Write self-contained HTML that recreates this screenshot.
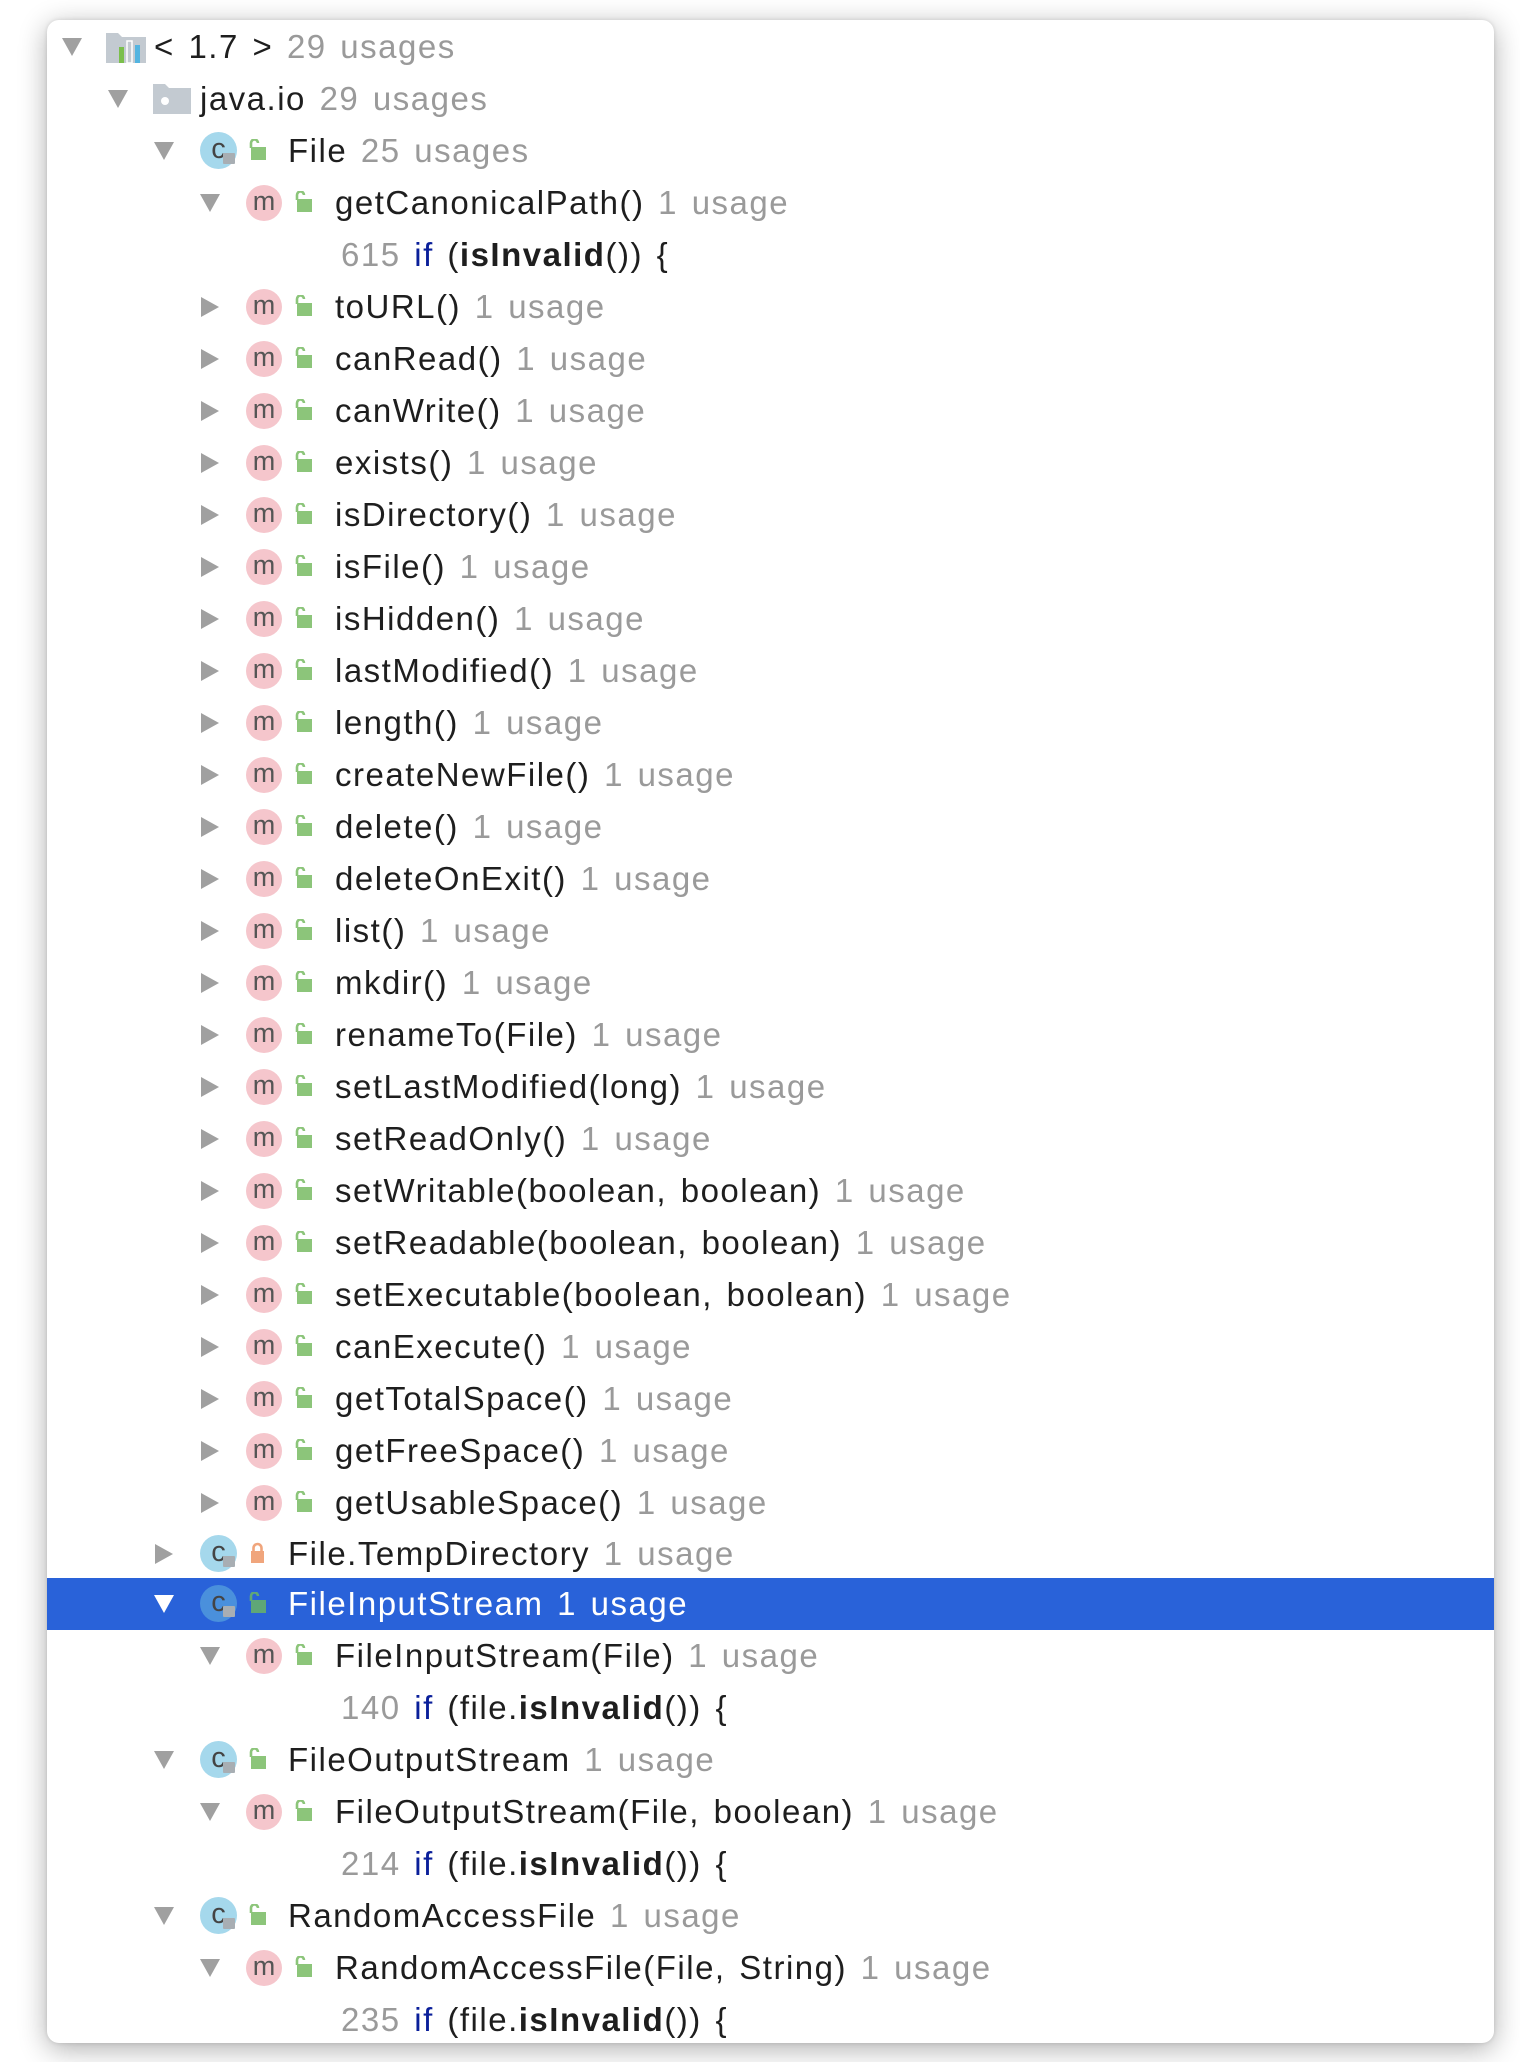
<!DOCTYPE html>
<html><head><meta charset="utf-8"><style>
html,body{margin:0;padding:0;background:#fff;width:1520px;height:2062px;overflow:hidden}
.panel{position:absolute;left:47px;top:20px;width:1447px;height:2023px;background:#fff;border-radius:12px;box-shadow:0 6px 28px rgba(0,0,0,0.32),0 0 4px rgba(0,0,0,0.12);overflow:hidden}
.r{position:absolute;left:0;width:1447px;height:52px;font-family:"Liberation Sans",sans-serif;font-size:33px;color:#1e1e1e;letter-spacing:1.5px;word-spacing:3px;white-space:nowrap}
.r>*{position:absolute}
.t{top:0;height:52px;line-height:52px}
.u{color:#9a9a9a}
.tri{width:0;height:0;top:17px}
.down{border-left:10px solid transparent;border-right:10px solid transparent;border-top:18px solid #a0a0a0}
.right{border-top:10px solid transparent;border-bottom:10px solid transparent;border-left:18px solid #a0a0a0;top:16px}
.m{width:36px;height:36px;border-radius:50%;background:#f5c6cc;top:8px;text-align:center;line-height:33px;font-size:27px;color:#555;letter-spacing:0}
.c{width:37px;height:37px;border-radius:50%;background:#a5d8ec;top:7px;text-align:center;line-height:35px;font-size:29px;color:#444;letter-spacing:0}
.c::after{content:"";position:absolute;left:23px;top:21px;width:12px;height:11px;background:#a8aeb3;border-radius:1px}
.sel{background:#2962d9;color:#fff}
.sel .u{color:#fff}
.kw{color:#0a1f9a}
b{font-weight:bold}
</style></head><body>
<div class="panel">
<svg width="0" height="0" style="position:absolute"><defs>
<g id="lk"><rect x="4" y="8" width="15" height="13" fill="#8cc57a"/><path d="M4 9 V4 a3.5 3.5 0 0 1 7 0" fill="none" stroke="#8cc57a" stroke-width="2.6"/></g>
</defs></svg>

<div class="r" style="top:1px"><div class="tri down" style="left:15px"></div>
<svg style="left:59px;top:10px" width="42" height="32"><path d="M0 2 h12 l4 4 h24 v26 h-40z" fill="#c3cad1"/><rect x="13" y="16" width="5" height="16" fill="#7bbf4c"/><rect x="21" y="10" width="5" height="22" fill="#c3cad1" stroke="#fff" stroke-width="1.5"/><rect x="29" y="14" width="5" height="18" fill="#53b4e0"/></svg>
<div class="t" style="left:107px">&lt; 1.7 &gt; <span class="u">29 usages</span></div></div>

<div class="r" style="top:53px"><div class="tri down" style="left:61px"></div>
<svg style="left:106px;top:11px" width="38" height="30"><path d="M0 0 h12 l4 4 h22 v26 h-38z" fill="#c3cad1"/><circle cx="12" cy="17" r="4" fill="#fff"/></svg>
<div class="t" style="left:153px">java.io <span class="u">29 usages</span></div></div>

<div class="r" style="top:105px"><div class="tri down" style="left:107px"></div>
<div class="c" style="left:153px">c</div><svg style="left:200px;top:14px" width="22" height="22"><use href="#lk"/></svg>
<div class="t" style="left:241px">File <span class="u">25 usages</span></div></div>

<div class="r" style="top:157px"><div class="tri down" style="left:153px"></div>
<div class="m" style="left:199px">m</div><svg style="left:246px;top:14px" width="22" height="22"><use href="#lk"/></svg>
<div class="t" style="left:288px">getCanonicalPath() <span class="u">1 usage</span></div></div>

<div class="r" style="top:209px"><div class="t" style="left:294px"><span class="u">615</span> <span class="kw">if</span> (<b>isInvalid</b>()) {</div></div>

<div class="r" style="top:1508px"><div class="tri right" style="left:108px"></div>
<div class="c" style="left:153px">c</div><svg style="left:200px;top:14px" width="22" height="22"><rect x="4" y="9" width="13" height="12" fill="#f0a57c"/><path d="M6.5 10 V6 a4 4 0 0 1 8 0 V10" fill="none" stroke="#f0a57c" stroke-width="2.6"/></svg>
<div class="t" style="left:241px">File.TempDirectory <span class="u">1 usage</span></div></div>

<div class="r sel" style="top:1558px;height:52px"><div class="tri down" style="left:107px;border-top-color:#fff"></div>
<div class="c" style="left:153px;background:#4a90dc">c</div><svg style="left:200px;top:14px" width="22" height="22"><rect x="4" y="8" width="15" height="13" fill="#5fa777"/><path d="M4 9 V4 a3.5 3.5 0 0 1 7 0" fill="none" stroke="#5fa777" stroke-width="2.6"/></svg>
<div class="t" style="left:241px">FileInputStream <span class="u">1 usage</span></div></div>

<div class="r" style="top:1610px"><div class="tri down" style="left:153px"></div>
<div class="m" style="left:199px">m</div><svg style="left:246px;top:14px" width="22" height="22"><use href="#lk"/></svg>
<div class="t" style="left:288px">FileInputStream(File) <span class="u">1 usage</span></div></div>
<div class="r" style="top:1662px"><div class="t" style="left:294px"><span class="u">140</span> <span class="kw">if</span> (file.<b>isInvalid</b>()) {</div></div>

<div class="r" style="top:1714px"><div class="tri down" style="left:107px"></div>
<div class="c" style="left:153px">c</div><svg style="left:200px;top:14px" width="22" height="22"><use href="#lk"/></svg>
<div class="t" style="left:241px">FileOutputStream <span class="u">1 usage</span></div></div>
<div class="r" style="top:1766px"><div class="tri down" style="left:153px"></div>
<div class="m" style="left:199px">m</div><svg style="left:246px;top:14px" width="22" height="22"><use href="#lk"/></svg>
<div class="t" style="left:288px">FileOutputStream(File, boolean) <span class="u">1 usage</span></div></div>
<div class="r" style="top:1818px"><div class="t" style="left:294px"><span class="u">214</span> <span class="kw">if</span> (file.<b>isInvalid</b>()) {</div></div>

<div class="r" style="top:1870px"><div class="tri down" style="left:107px"></div>
<div class="c" style="left:153px">c</div><svg style="left:200px;top:14px" width="22" height="22"><use href="#lk"/></svg>
<div class="t" style="left:241px">RandomAccessFile <span class="u">1 usage</span></div></div>
<div class="r" style="top:1922px"><div class="tri down" style="left:153px"></div>
<div class="m" style="left:199px">m</div><svg style="left:246px;top:14px" width="22" height="22"><use href="#lk"/></svg>
<div class="t" style="left:288px">RandomAccessFile(File, String) <span class="u">1 usage</span></div></div>
<div class="r" style="top:1974px"><div class="t" style="left:294px"><span class="u">235</span> <span class="kw">if</span> (file.<b>isInvalid</b>()) {</div></div>

<div class="r" style="top:261px"><div class="tri right" style="left:154px"></div><div class="m" style="left:199px">m</div><svg style="left:246px;top:14px" width="22" height="22"><use href="#lk"/></svg><div class="t" style="left:288px">toURL() <span class="u">1 usage</span></div></div>
<div class="r" style="top:313px"><div class="tri right" style="left:154px"></div><div class="m" style="left:199px">m</div><svg style="left:246px;top:14px" width="22" height="22"><use href="#lk"/></svg><div class="t" style="left:288px">canRead() <span class="u">1 usage</span></div></div>
<div class="r" style="top:365px"><div class="tri right" style="left:154px"></div><div class="m" style="left:199px">m</div><svg style="left:246px;top:14px" width="22" height="22"><use href="#lk"/></svg><div class="t" style="left:288px">canWrite() <span class="u">1 usage</span></div></div>
<div class="r" style="top:417px"><div class="tri right" style="left:154px"></div><div class="m" style="left:199px">m</div><svg style="left:246px;top:14px" width="22" height="22"><use href="#lk"/></svg><div class="t" style="left:288px">exists() <span class="u">1 usage</span></div></div>
<div class="r" style="top:469px"><div class="tri right" style="left:154px"></div><div class="m" style="left:199px">m</div><svg style="left:246px;top:14px" width="22" height="22"><use href="#lk"/></svg><div class="t" style="left:288px">isDirectory() <span class="u">1 usage</span></div></div>
<div class="r" style="top:521px"><div class="tri right" style="left:154px"></div><div class="m" style="left:199px">m</div><svg style="left:246px;top:14px" width="22" height="22"><use href="#lk"/></svg><div class="t" style="left:288px">isFile() <span class="u">1 usage</span></div></div>
<div class="r" style="top:573px"><div class="tri right" style="left:154px"></div><div class="m" style="left:199px">m</div><svg style="left:246px;top:14px" width="22" height="22"><use href="#lk"/></svg><div class="t" style="left:288px">isHidden() <span class="u">1 usage</span></div></div>
<div class="r" style="top:625px"><div class="tri right" style="left:154px"></div><div class="m" style="left:199px">m</div><svg style="left:246px;top:14px" width="22" height="22"><use href="#lk"/></svg><div class="t" style="left:288px">lastModified() <span class="u">1 usage</span></div></div>
<div class="r" style="top:677px"><div class="tri right" style="left:154px"></div><div class="m" style="left:199px">m</div><svg style="left:246px;top:14px" width="22" height="22"><use href="#lk"/></svg><div class="t" style="left:288px">length() <span class="u">1 usage</span></div></div>
<div class="r" style="top:729px"><div class="tri right" style="left:154px"></div><div class="m" style="left:199px">m</div><svg style="left:246px;top:14px" width="22" height="22"><use href="#lk"/></svg><div class="t" style="left:288px">createNewFile() <span class="u">1 usage</span></div></div>
<div class="r" style="top:781px"><div class="tri right" style="left:154px"></div><div class="m" style="left:199px">m</div><svg style="left:246px;top:14px" width="22" height="22"><use href="#lk"/></svg><div class="t" style="left:288px">delete() <span class="u">1 usage</span></div></div>
<div class="r" style="top:833px"><div class="tri right" style="left:154px"></div><div class="m" style="left:199px">m</div><svg style="left:246px;top:14px" width="22" height="22"><use href="#lk"/></svg><div class="t" style="left:288px">deleteOnExit() <span class="u">1 usage</span></div></div>
<div class="r" style="top:885px"><div class="tri right" style="left:154px"></div><div class="m" style="left:199px">m</div><svg style="left:246px;top:14px" width="22" height="22"><use href="#lk"/></svg><div class="t" style="left:288px">list() <span class="u">1 usage</span></div></div>
<div class="r" style="top:937px"><div class="tri right" style="left:154px"></div><div class="m" style="left:199px">m</div><svg style="left:246px;top:14px" width="22" height="22"><use href="#lk"/></svg><div class="t" style="left:288px">mkdir() <span class="u">1 usage</span></div></div>
<div class="r" style="top:989px"><div class="tri right" style="left:154px"></div><div class="m" style="left:199px">m</div><svg style="left:246px;top:14px" width="22" height="22"><use href="#lk"/></svg><div class="t" style="left:288px">renameTo(File) <span class="u">1 usage</span></div></div>
<div class="r" style="top:1041px"><div class="tri right" style="left:154px"></div><div class="m" style="left:199px">m</div><svg style="left:246px;top:14px" width="22" height="22"><use href="#lk"/></svg><div class="t" style="left:288px">setLastModified(long) <span class="u">1 usage</span></div></div>
<div class="r" style="top:1093px"><div class="tri right" style="left:154px"></div><div class="m" style="left:199px">m</div><svg style="left:246px;top:14px" width="22" height="22"><use href="#lk"/></svg><div class="t" style="left:288px">setReadOnly() <span class="u">1 usage</span></div></div>
<div class="r" style="top:1145px"><div class="tri right" style="left:154px"></div><div class="m" style="left:199px">m</div><svg style="left:246px;top:14px" width="22" height="22"><use href="#lk"/></svg><div class="t" style="left:288px">setWritable(boolean, boolean) <span class="u">1 usage</span></div></div>
<div class="r" style="top:1197px"><div class="tri right" style="left:154px"></div><div class="m" style="left:199px">m</div><svg style="left:246px;top:14px" width="22" height="22"><use href="#lk"/></svg><div class="t" style="left:288px">setReadable(boolean, boolean) <span class="u">1 usage</span></div></div>
<div class="r" style="top:1249px"><div class="tri right" style="left:154px"></div><div class="m" style="left:199px">m</div><svg style="left:246px;top:14px" width="22" height="22"><use href="#lk"/></svg><div class="t" style="left:288px">setExecutable(boolean, boolean) <span class="u">1 usage</span></div></div>
<div class="r" style="top:1301px"><div class="tri right" style="left:154px"></div><div class="m" style="left:199px">m</div><svg style="left:246px;top:14px" width="22" height="22"><use href="#lk"/></svg><div class="t" style="left:288px">canExecute() <span class="u">1 usage</span></div></div>
<div class="r" style="top:1353px"><div class="tri right" style="left:154px"></div><div class="m" style="left:199px">m</div><svg style="left:246px;top:14px" width="22" height="22"><use href="#lk"/></svg><div class="t" style="left:288px">getTotalSpace() <span class="u">1 usage</span></div></div>
<div class="r" style="top:1405px"><div class="tri right" style="left:154px"></div><div class="m" style="left:199px">m</div><svg style="left:246px;top:14px" width="22" height="22"><use href="#lk"/></svg><div class="t" style="left:288px">getFreeSpace() <span class="u">1 usage</span></div></div>
<div class="r" style="top:1457px"><div class="tri right" style="left:154px"></div><div class="m" style="left:199px">m</div><svg style="left:246px;top:14px" width="22" height="22"><use href="#lk"/></svg><div class="t" style="left:288px">getUsableSpace() <span class="u">1 usage</span></div></div>
</div>
</body></html>
